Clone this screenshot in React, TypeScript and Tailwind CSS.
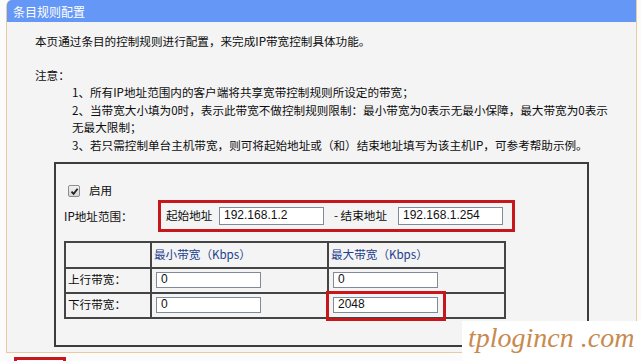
const cjk = { fontFamily: '"Noto Sans CJK SC", "DejaVu Sans", sans-serif' };

function Field({ value, w = 'w-[105px]', h = 'h-[18px]' }: { value: string; w?: string; h?: string }) {
  return (
    <div
      className={`${w} ${h} border border-[#7f8b99] bg-white pl-[4px] flex items-center text-[12px] text-[#111] font-['Liberation_Sans',Arial,sans-serif]`}
    >
      {value}
    </div>
  );
}

function Check() {
  return (
    <span className="w-[12px] h-[12px] border border-[#8d8d8d] rounded-[2px] bg-gradient-to-b from-[#f2f2f2] to-[#d6d6d6] flex items-center justify-center">
      <svg width="9" height="9" viewBox="0 0 9 9">
        <path d="M1.5 4.6 L3.6 6.8 L7.6 1.8" fill="none" stroke="#222" strokeWidth="1.8" />
      </svg>
    </span>
  );
}

export default function App() {
  return (
    <div className="relative w-[641px] h-[361px] overflow-hidden bg-[#fbfbfb] text-[11.6px] text-[#0d0d0d]" style={cjk}>
      <div className="ml-[6px] w-[631px] border-x border-b border-[#e8cc9f] bg-[#f4f4f4] rounded-tl-[6px] pb-[5px]">
        <div className="h-[22px] bg-[#6597f6] rounded-tl-[5px] pl-[6px] leading-[24px] text-[12px] text-white">
          条目规则配置
        </div>

        <div className="pl-[28px] pt-[11px] leading-[17.5px] whitespace-nowrap">
          <p>本页通过条目的控制规则进行配置，来完成IP带宽控制具体功能。</p>
          <p className="mt-[16px]">注意：</p>
          <div className="pl-[37px]">
            <p>1、所有IP地址范围内的客户端将共享宽带控制规则所设定的带宽；</p>
            <p>2、当带宽大小填为0时，表示此带宽不做控制规则限制：最小带宽为0表示无最小保障，最大带宽为0表示</p>
            <p>无最大限制；</p>
            <p>3、若只需控制单台主机带宽，则可将起始地址或（和）结束地址填写为该主机IP，可参考帮助示例。</p>
          </div>

          <div className="mt-[7.5px] ml-[19px] w-[535px] h-[185px] border-2 border-[#3c3c3c] pt-[19px]">
            <div className="h-[17px] flex items-center pl-[12px]">
              <Check />
              <span className="ml-[9px]">启用</span>
            </div>

            <div className="flex items-center pl-[8px]">
              <span className="w-[94px] pt-[3px]">IP地址范围：</span>
              <div className="w-[357px] h-[32px] border-[3px] border-[#c8161d] flex items-center pl-[5px]">
                <span className="w-[53px]">起始地址</span>
                <Field value="192.168.1.2" />
                <span className="ml-[10px] w-[64px]">- 结束地址</span>
                <Field value="192.168.1.254" />
              </div>
            </div>

            <table className="mt-[9px] ml-[8px] w-[440px] table-fixed border-collapse border-2 border-[#444]">
              <colgroup>
                <col className="w-[86px]" />
                <col className="w-[177px]" />
                <col className="w-[177px]" />
              </colgroup>
              <tbody>
                <tr className="h-[26px]">
                  <td className="border-2 border-[#444]"></td>
                  <td className="border-2 border-[#444] pl-[2px] text-[#23408c]">最小带宽（Kbps）</td>
                  <td className="border-2 border-[#444] pl-[2px] text-[#23408c]">最大带宽（Kbps）</td>
                </tr>
                <tr className="h-[25px]">
                  <td className="border-2 border-[#444] pl-[2px]">上行带宽：</td>
                  <td className="border-2 border-[#444] pl-[4px]">
                    <Field value="0" h="h-[16px]" />
                  </td>
                  <td className="border-2 border-[#444] pl-[4px]">
                    <Field value="0" h="h-[16px]" />
                  </td>
                </tr>
                <tr className="h-[25px]">
                  <td className="border-2 border-[#444] pl-[2px]">下行带宽：</td>
                  <td className="border-2 border-[#444] pl-[4px]">
                    <Field value="0" h="h-[16px]" />
                  </td>
                  <td className="border-2 border-[#444] pl-[4px]">
                    <div className="relative w-[105px]">
                      <Field value="2048" h="h-[16px]" />
                      <span className="absolute -left-[7px] -right-[8px] -top-[6px] -bottom-[8px] border-[3px] border-[#c8161d]" />
                    </div>
                  </td>
                </tr>
              </tbody>
            </table>
          </div>
        </div>
      </div>

      <div className="mt-[4px] ml-[14px] w-[52px] h-[10px] border-[3px] border-b-0 border-[#c8161d]" />

      <div className="absolute left-[462px] top-[321px] w-[179px] h-[40px] bg-white pl-[6px] leading-[34px] text-[28px] italic text-[#c98a4e] font-['Liberation_Serif',serif] whitespace-nowrap">
        tplogincn .com
      </div>
    </div>
  );
}
